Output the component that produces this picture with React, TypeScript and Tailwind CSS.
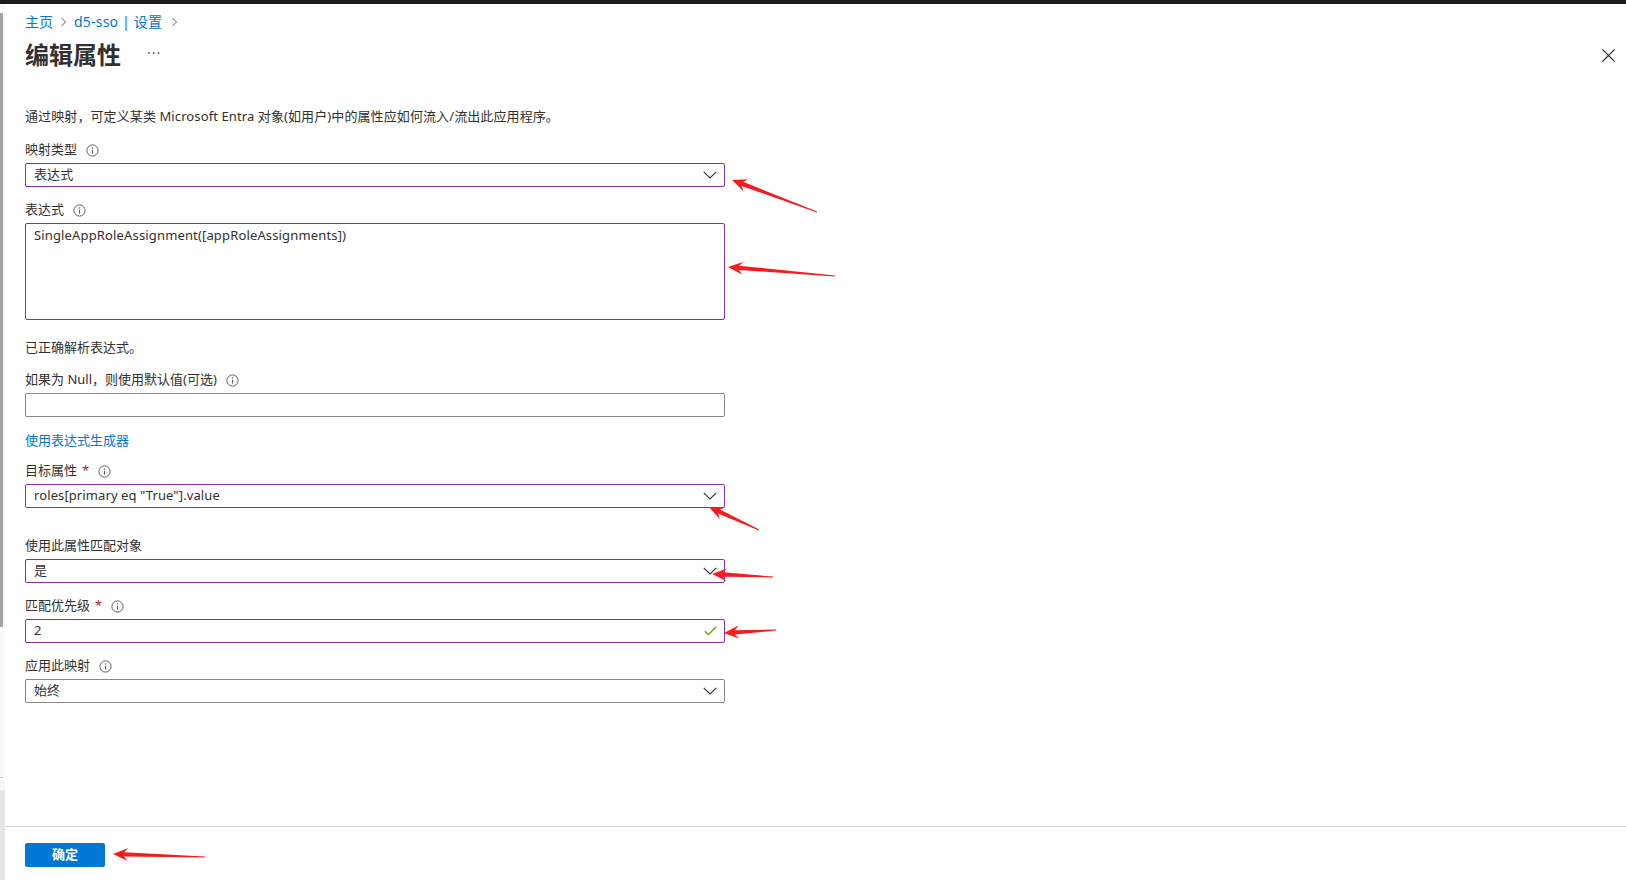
import React from 'react';

const font = 'font-["Noto_Sans","Noto_Sans_CJK_SC",sans-serif]';

const InfoIcon: React.FC = () => (
  <svg width="13" height="13" viewBox="0 0 13 13" className="shrink-0">
    <circle cx="6.5" cy="6.5" r="5.6" fill="none" stroke="#605e5c" strokeWidth="1" />
    <circle cx="6.5" cy="4" r="0.75" fill="#605e5c" />
    <path d="M6.5 5.8 V9.6" stroke="#605e5c" strokeWidth="1.1" />
  </svg>
);

const Chevron: React.FC = () => (
  <svg width="14" height="8" viewBox="0 0 14 8" className="shrink-0">
    <path d="M0.7 0.8 L7 7 L13.3 0.8" fill="none" stroke="#323130" strokeWidth="1.1" />
  </svg>
);

const Check: React.FC = () => (
  <svg width="13" height="10" viewBox="0 0 13 10" className="shrink-0">
    <path d="M0.8 5.2 L4.3 8.6 L12.2 0.8" fill="none" stroke="#57a300" strokeWidth="1.3" />
  </svg>
);

const Label: React.FC<{ text: string; required?: boolean; info?: boolean }> = ({ text, required, info }) => (
  <div className="flex items-center h-[20px] mb-[3px] text-[13px] text-[#323130]">
    <span>{text}</span>
    {required && <span className="ml-[5px] text-[#a4262c]">*</span>}
    {info && (
      <span className="ml-[9px] flex items-center">
        <InfoIcon />
      </span>
    )}
  </div>
);

const Box: React.FC<{ value?: string; dirty?: boolean; right?: React.ReactNode }> = ({ value, dirty, right }) => (
  <div
    className={`flex items-center justify-between w-[700px] h-[24px] border rounded-[2px] pl-[8px] pr-[7px] text-[13px] text-[#323130] ${
      dirty ? 'border-[#8a2da8]' : 'border-[#8a8886]'
    }`}
  >
    <span className="truncate tracking-[0.1px]">{value}</span>
    {right}
  </div>
);

type Arrow = { tip: [number, number]; tail: [number, number] };

// red annotation arrows drawn over the form
const arrows: Arrow[] = [
  { tip: [732, 180], tail: [817, 212] },
  { tip: [728, 267], tail: [835, 276] },
  { tip: [709, 507], tail: [759, 530] },
  { tip: [712, 574], tail: [773, 577] },
  { tip: [724, 633], tail: [776, 630] },
  { tip: [113, 854], tail: [205, 857] },
];

const arrowPoints = ({ tip, tail }: Arrow) => {
  const dx = tail[0] - tip[0];
  const dy = tail[1] - tip[1];
  const len = Math.hypot(dx, dy);
  const ux = dx / len;
  const uy = dy / len;
  const nx = -uy;
  const ny = ux;
  const L = 15;
  const W = 6.5;
  const notch = 11;
  const w = 2.2;
  const p = (a: number, b: number) => `${(tip[0] + ux * a + nx * b).toFixed(1)},${(tip[1] + uy * a + ny * b).toFixed(1)}`;
  return [
    p(0, 0),
    p(L, W),
    p(notch, w),
    `${(tail[0] + nx * 0.4).toFixed(1)},${(tail[1] + ny * 0.4).toFixed(1)}`,
    `${(tail[0] - nx * 0.4).toFixed(1)},${(tail[1] - ny * 0.4).toFixed(1)}`,
    p(notch, -w),
    p(L, -W),
  ].join(' ');
};

const App: React.FC = () => {
  return (
    <div className={`relative w-[1626px] h-[880px] overflow-hidden bg-white ${font}`}>
      <div className="h-[4px] bg-[#1b1b1b]" />
      <div className="flex h-[876px]">
        {/* scrollbar of the page behind the blade */}
        <div className="w-[5px] flex flex-col bg-[#f8f8f8]">
          <div className="mt-[9px] h-[614px] w-[3px] bg-[#a3a3a3]" />
          <div className="mt-[150px] text-[7px] leading-[6px] text-[#888]">ˇ</div>
          <div className="flex-1 mt-[7px] bg-[#e6e6e6]" />
        </div>

        <div className="flex-1 flex flex-col">
          <div className="flex-1 pl-[20px] pr-[11px]">
            <nav className="flex items-center pt-[7px] h-[27px] text-[14px] text-[#0078d4]">
              <span>主页</span>
              <span className="mx-[7px] mt-[2px]">
                <svg width="7" height="10" viewBox="0 0 7 10">
                  <path d="M1.5 1 L5.5 5 L1.5 9" fill="none" stroke="#605e5c" strokeWidth="1" />
                </svg>
              </span>
              <span className="tracking-[0.2px]">d5-sso | 设置</span>
              <span className="ml-[9px] mt-[2px]">
                <svg width="7" height="10" viewBox="0 0 7 10">
                  <path d="M1.5 1 L5.5 5 L1.5 9" fill="none" stroke="#605e5c" strokeWidth="1" />
                </svg>
              </span>
            </nav>

            <div className="flex items-center justify-between mt-[8px] h-[32px]">
              <div className="flex items-center">
                <h1 className="text-[24px] font-bold text-[#323130] leading-[32px]">编辑属性</h1>
                <span className="ml-[26px] text-[14px] text-[#605e5c] tracking-[1px] leading-none -mt-[4px]">···</span>
              </div>
              <svg width="13" height="13" viewBox="0 0 13 13" className="mt-[1px]">
                <path d="M0.5 0.5 L12.5 12.5 M12.5 0.5 L0.5 12.5" stroke="#323130" strokeWidth="1.1" />
              </svg>
            </div>

            <p className="mt-[35px] h-[20px] leading-[20px] text-[13px] text-[#323130] tracking-[0.1px]">
              通过映射，可定义某类 Microsoft Entra 对象(如用户)中的属性应如何流入/流出此应用程序。
            </p>

            <div className="mt-[14px]">
              <Label text="映射类型" info />
              <Box value="表达式" dirty right={<Chevron />} />
            </div>

            <div className="mt-[13px]">
              <Label text="表达式" info />
              <div className="w-[700px] h-[97px] border border-[#8a2da8] rounded-[2px] px-[8px] pt-[1px] text-[13px] leading-[20px] text-[#323130] tracking-[0.15px]">
                SingleAppRoleAssignment([appRoleAssignments])
              </div>
            </div>

            <p className="mt-[17px] h-[20px] leading-[20px] text-[13px] text-[#323130]">已正确解析表达式。</p>

            <div className="mt-[13px]">
              <Label text="如果为 Null，则使用默认值(可选)" info />
              <Box />
            </div>

            <div className="mt-[13px] h-[20px] leading-[20px] text-[13px] text-[#0078d4]">使用表达式生成器</div>

            <div className="mt-[11px]">
              <Label text="目标属性" required info />
              <Box value='roles[primary eq "True"].value' dirty right={<Chevron />} />
            </div>

            <div className="mt-[28px]">
              <Label text="使用此属性匹配对象" />
              <Box value="是" dirty right={<Chevron />} />
            </div>

            <div className="mt-[13px]">
              <Label text="匹配优先级" required info />
              <Box value="2" dirty right={<Check />} />
            </div>

            <div className="mt-[13px]">
              <Label text="应用此映射" info />
              <Box value="始终" right={<Chevron />} />
            </div>
          </div>

          <footer className="border-t border-[#d6d6d6] pt-[14px] pb-[13px] pl-[20px]">
            <button className="w-[80px] h-[24px] rounded-[2px] bg-[#0078d4] text-white text-[13px] font-bold">
              确定
            </button>
          </footer>
        </div>
      </div>

      <svg className="absolute inset-0 pointer-events-none" width="1626" height="880">
        {arrows.map((a, i) => (
          <polygon key={i} points={arrowPoints(a)} fill="#f41c1c" />
        ))}
      </svg>
    </div>
  );
};

export default App;
